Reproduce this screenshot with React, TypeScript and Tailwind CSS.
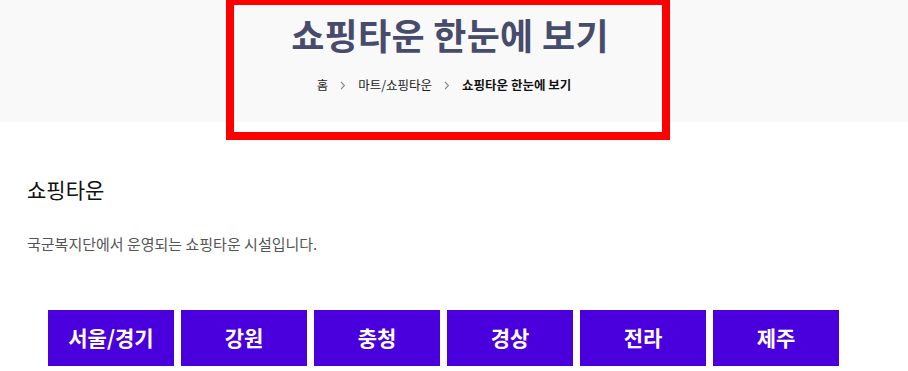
const regions = ['서울/경기', '강원', '충청', '경상', '전라', '제주'];

function Chevron() {
  return (
    <svg width="6" height="9" viewBox="0 0 6 9" className="mx-[12px]" aria-hidden>
      <path d="M1 1l3.5 3.5L1 8" fill="none" stroke="#8a8a8a" strokeWidth="1.1" />
    </svg>
  );
}

export default function App() {
  return (
    <div
      className="relative w-[908px] h-[371px] overflow-hidden bg-white"
      style={{ fontFamily: '"Noto Sans CJK KR", "Noto Sans", sans-serif' }}
    >
      <header className="h-[122px] bg-[#f9f9f9] flex flex-col items-center pt-[10px]">
        <h1 className="text-[36px] leading-[48px] font-bold text-[#484c6c] tracking-[0.3px] pr-[8px]">
          쇼핑타운 한눈에 보기
        </h1>
        <nav className="mt-[17px] flex items-center text-[12.5px] leading-[20px] text-[#222] pr-[20px]">
          <span>홈</span>
          <Chevron />
          <span>마트/쇼핑타운</span>
          <Chevron />
          <span className="font-bold text-[#111]">쇼핑타운 한눈에 보기</span>
        </nav>
      </header>

      <section className="px-[27px] pt-[52px]">
        <h2 className="text-[21px] leading-[30px] text-[#111]">쇼핑타운</h2>
        <p className="mt-[29px] text-[15px] leading-[22px] text-[#555]">
          국군복지단에서 운영되는 쇼핑타운 시설입니다.
        </p>
      </section>

      <div className="mt-[55px] pl-[48px] flex gap-[7px]">
        {regions.map(r => (
          <button
            key={r}
            className="w-[126px] h-[56px] bg-[#4a00dc] text-white text-[21px] font-bold flex items-center justify-center"
          >
            {r}
          </button>
        ))}
      </div>

      {/* annotation frame */}
      <div className="absolute left-[226px] top-[-3px] w-[444px] h-[143px] border-[8px] border-[#ff0000] pointer-events-none" />
    </div>
  );
}
